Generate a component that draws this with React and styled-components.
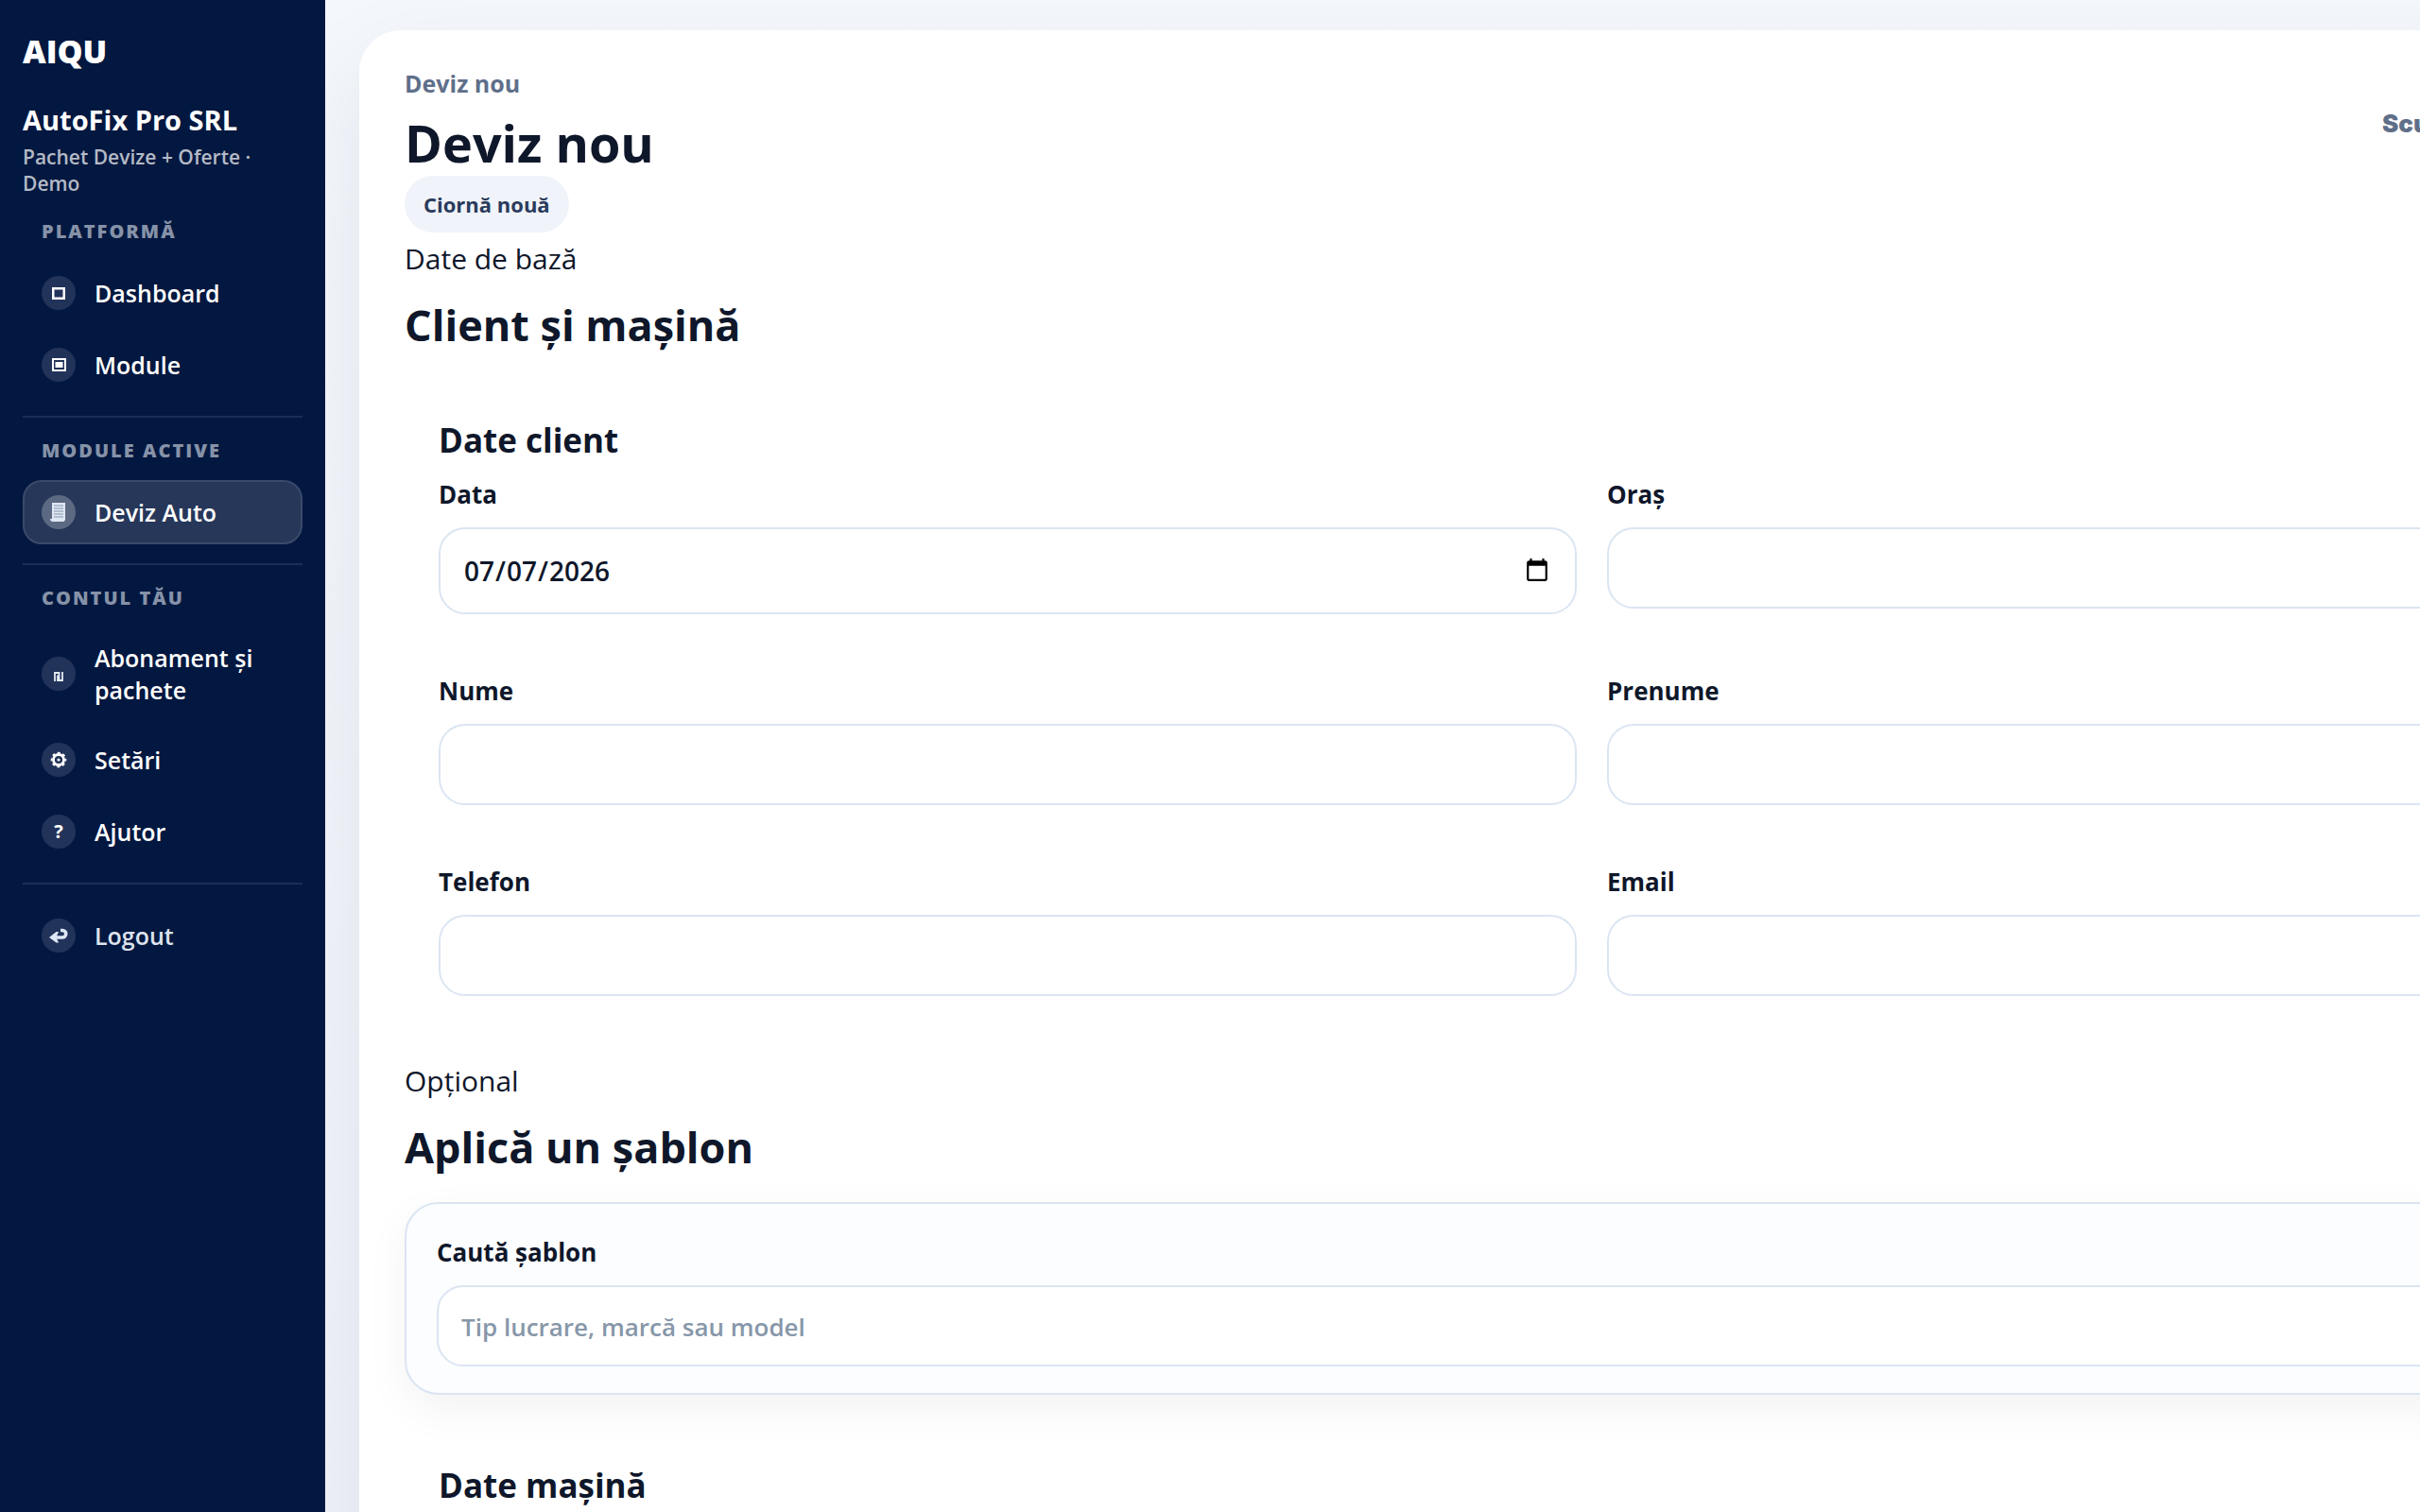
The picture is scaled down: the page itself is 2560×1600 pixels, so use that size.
import React from 'react'
import styled, { createGlobalStyle } from 'styled-components'

const GlobalStyle = createGlobalStyle`
  * {
    box-sizing: border-box;
  }
  body {
    margin: 0;
    overflow: hidden;
    font-family: "Open Sans", "Noto Sans", sans-serif;
    font-size: 30px;
    line-height: 44px;
    color: #0f172a;
    background: #eef2f9;
  }
`
const Layout = styled.div`
  display: flex;
  min-height: 100vh;
`
const Sidebar = styled.aside`
  flex: 0 0 344px;
  padding: 32px 24px;
  background: #031840;
  color: #ffffff;
`
const Brand = styled.div`
  font-weight: 800;
  font-size: 34px;
  line-height: 44px;
`
const Company = styled.div`
  margin-top: 31px;
  font-weight: 700;
  font-size: 29px;
  line-height: 40px;
`
const Plan = styled.div`
  margin-top: 5px;
  margin-bottom: 24px;
  font-weight: 600;
  font-size: 21px;
  line-height: 28px;
  color: #b4bac6;
`
const NavTitle = styled.div`
  margin: 22px 0 18px;
  padding-left: 20px;
  font-weight: 800;
  font-size: 20px;
  line-height: 26px;
  letter-spacing: 2px;
  color: #8692a8;
`
const Divider = styled.hr`
  height: 2px;
  margin: 20px 0;
  border: 0;
  background: #1b2d53;
`
const NavList = styled.nav`
  display: flex;
  flex-direction: column;
  gap: 8px;
`
const NavLink = styled.a`
  display: flex;
  align-items: center;
  gap: 20px;
  min-height: 68px;
  padding: 13px 18px;
  border: 2px solid ${(p) => (p.$active ? '#3b4a6a' : 'transparent')};
  border-radius: 20px;
  background: ${(p) => (p.$active ? '#26375a' : 'transparent')};
  color: ${(p) => (p.$muted ? '#dde3ee' : '#ffffff')};
  font-weight: 600;
  font-size: 25px;
  line-height: 34px;
  text-decoration: none;
`
const NavIcon = styled.span`
  display: flex;
  flex: 0 0 36px;
  align-items: center;
  justify-content: center;
  height: 36px;
  border-radius: 50%;
  background: ${(p) => (p.$active ? '#5c6983' : '#22335a')};
  font-weight: 700;
  font-size: 20px;
  line-height: 36px;
`
const Main = styled.main`
  flex: 1;
  min-width: 0;
  padding: 32px 36px 0;
  overflow: hidden;
  background: linear-gradient(180deg, #f4f7fc 0%, #eff2f9 100%);
`
const Card = styled.section`
  width: max-content;
  min-width: 100%;
  min-height: 100vh;
  padding: 36px 48px;
  border-radius: 44px;
  background: #ffffff;
  box-shadow: 0 36px 100px rgba(15, 23, 42, 0.08);
`
const Header = styled.header`
  display: flex;
  justify-content: space-between;
  margin-bottom: 6px;
`
const Eyebrow = styled.div`
  font-weight: 700;
  font-size: 25px;
  line-height: 40px;
  color: #5f6f8a;
`
const Title = styled.h1`
  margin: 8px 0 0;
  font-weight: 700;
  font-size: 54px;
  line-height: 70px;
`
const Status = styled.span`
  display: inline-block;
  padding: 12px 20px;
  border-radius: 30px;
  background: #f0f3f9;
  color: #2a3b5c;
  font-weight: 700;
  font-size: 22px;
  line-height: 36px;
`
const HeaderActions = styled.div`
  flex: 0 0 420px;
  padding-top: 39px;
`
const ShortcutButton = styled.button`
  padding: 0;
  border: 0;
  background: none;
  color: #5f6f8a;
  font-family: Inter, sans-serif;
  font-weight: 900;
  font-size: 26px;
  line-height: 36px;
`
const Hint = styled.div`
  line-height: 44px;
`
const SectionTitle = styled.h2`
  margin: 16px 0 26px;
  font-weight: 700;
  font-size: 45px;
  line-height: 64px;
`
const FormGroup = styled.div`
  margin-bottom: 32px;
  padding: 40px 36px 36px;
`
const GroupTitle = styled.h3`
  margin: 0 0 14px;
  font-weight: 700;
  font-size: 35px;
  line-height: 48px;
`
const Fields = styled.div`
  display: grid;
  grid-template-columns: repeat(2, minmax(1204px, 1fr));
  align-items: start;
  gap: 62px 32px;
`
const Field = styled.div`
  display: flex;
  flex-direction: column;
  gap: 16px;
`
const Label = styled.label`
  font-weight: 700;
  font-size: 26px;
  line-height: 38px;
`
const Input = styled.input`
  width: 100%;
  height: ${(p) => (p.type === 'date' ? 92 : 86)}px;
  padding: 0 24px;
  border: 2px solid #dbe5f2;
  border-radius: 28px;
  background: #ffffff;
  color: #0f172a;
  font-family: inherit;
  font-weight: 600;
  font-size: 28px;
  outline: none;
  &::placeholder {
    color: #8797a9;
    font-size: 26px;
    opacity: 1;
  }
`
const SearchCard = styled.div`
  margin-bottom: 32px;
  padding: 32px 32px 28px;
  border: 2px solid #dbe5f2;
  border-radius: 36px;
  background: #fbfdff;
  box-shadow: 0 16px 48px rgba(15, 23, 42, 0.05);
`

const DashboardIcon = () => (
  <svg width="14" height="14" viewBox="0 0 14 14">
    <rect x="1.25" y="2.25" width="11.5" height="10.5" fill="none" stroke="#fff" strokeWidth="2.5" />
  </svg>
)
const ModuleIcon = () => (
  <svg width="16" height="14" viewBox="0 0 16 14">
    <rect x="2" y="1" width="13" height="12" fill="none" stroke="#fff" strokeWidth="2" />
    <rect x="4.5" y="4" width="8" height="6" fill="#fff" />
  </svg>
)
const InvoiceIcon = () => (
  <svg width="18" height="20" viewBox="0 0 18 20">
    <path d="M2 0h14v17a2.5 2.5 0 0 1-2.5 3H3a3 3 0 0 1-3-3h2z" fill="#dfe7f2" />
    <path d="M4 3h10M4 6h10M4 9h10M4 12h10M4 15h10" stroke="#a3b1c6" strokeWidth="1.4" />
  </svg>
)
const PlanIcon = () => (
  <svg width="10" height="16" viewBox="0 0 10 16">
    <path d="M1 16V7h4.5v7M4 9.500v5.500h5V6" fill="none" stroke="#e6ebf4" strokeWidth="1.8" />
  </svg>
)
const GearIcon = () => (
  <svg width="18" height="18" viewBox="0 0 18 18">
    <circle cx="9" cy="9" r="5.5" fill="none" stroke="#fff" strokeWidth="2.8" />
    <circle cx="9" cy="9" r="7.3" fill="none" stroke="#fff" strokeWidth="2" strokeDasharray="2.9 2.833" strokeDashoffset="1.45" />
    <circle cx="9" cy="9" r="1.6" fill="#fff" />
  </svg>
)
const LogoutIcon = () => (
  <svg width="20" height="16" viewBox="0 0 20 16">
    <path d="M12 2.5h2a3.7 3.7 0 0 1 0 7.5H6" fill="none" stroke="#dde6f5" strokeWidth="3.6" />
    <path d="M10 4 7.5 10l2.5 5.5H7.5L0 10l7.5-6z" fill="#dde6f5" />
  </svg>
)

const NavItem = ({ icon, label, active, muted }) => (
  <NavLink href="#" $active={active} $muted={muted}>
    <NavIcon $active={active} aria-hidden="true">{icon}</NavIcon>
    <span>{label}</span>
  </NavLink>
)

const TextField = ({ id, label, ...rest }) => (
  <Field>
    <Label htmlFor={id}>{label}</Label>
    <Input id={id} {...rest} />
  </Field>
)

const App = () => {
  return (
    <Layout>
      <GlobalStyle />
      <Sidebar>
        <Brand>AIQU</Brand>
        <Company>AutoFix Pro SRL</Company>
        <Plan>Pachet Devize + Oferte · Demo</Plan>
        <NavTitle>PLATFORMĂ</NavTitle>
        <NavList>
          <NavItem icon={<DashboardIcon />} label="Dashboard" />
          <NavItem icon={<ModuleIcon />} label="Module" />
        </NavList>
        <Divider />
        <NavTitle>MODULE ACTIVE</NavTitle>
        <NavList>
          <NavItem icon={<InvoiceIcon />} label="Deviz Auto" active />
        </NavList>
        <Divider />
        <NavTitle>CONTUL TĂU</NavTitle>
        <NavList>
          <NavItem icon={<PlanIcon />} label="Abonament și pachete" />
          <NavItem icon={<GearIcon />} label="Setări" />
          <NavItem icon="?" label="Ajutor" />
        </NavList>
        <Divider />
        <NavList>
          <NavItem icon={<LogoutIcon />} label="Logout" muted />
        </NavList>
      </Sidebar>
      <Main>
        <Card>
          <Header>
            <div>
              <Eyebrow>Deviz nou</Eyebrow>
              <Title>Deviz nou</Title>
              <Status>Ciornă nouă</Status>
            </div>
            <HeaderActions>
              <ShortcutButton type="button">Scurtături</ShortcutButton>
            </HeaderActions>
          </Header>
          <Hint>Date de bază</Hint>
          <SectionTitle>Client și mașină</SectionTitle>
          <FormGroup>
            <GroupTitle>Date client</GroupTitle>
            <Fields>
              <TextField id="data" label="Data" type="date" defaultValue="2026-07-07" />
              <TextField id="oras" label="Oraș" type="text" />
              <TextField id="nume" label="Nume" type="text" />
              <TextField id="prenume" label="Prenume" type="text" />
              <TextField id="telefon" label="Telefon" type="tel" />
              <TextField id="email" label="Email" type="email" />
            </Fields>
          </FormGroup>
          <Hint>Opțional</Hint>
          <SectionTitle>Aplică un șablon</SectionTitle>
          <SearchCard>
            <TextField id="sablon" label="Caută șablon" type="text" placeholder="Tip lucrare, marcă sau model" />
          </SearchCard>
          <FormGroup>
            <GroupTitle>Date mașină</GroupTitle>
          </FormGroup>
        </Card>
      </Main>
    </Layout>
  )
}

export default App
